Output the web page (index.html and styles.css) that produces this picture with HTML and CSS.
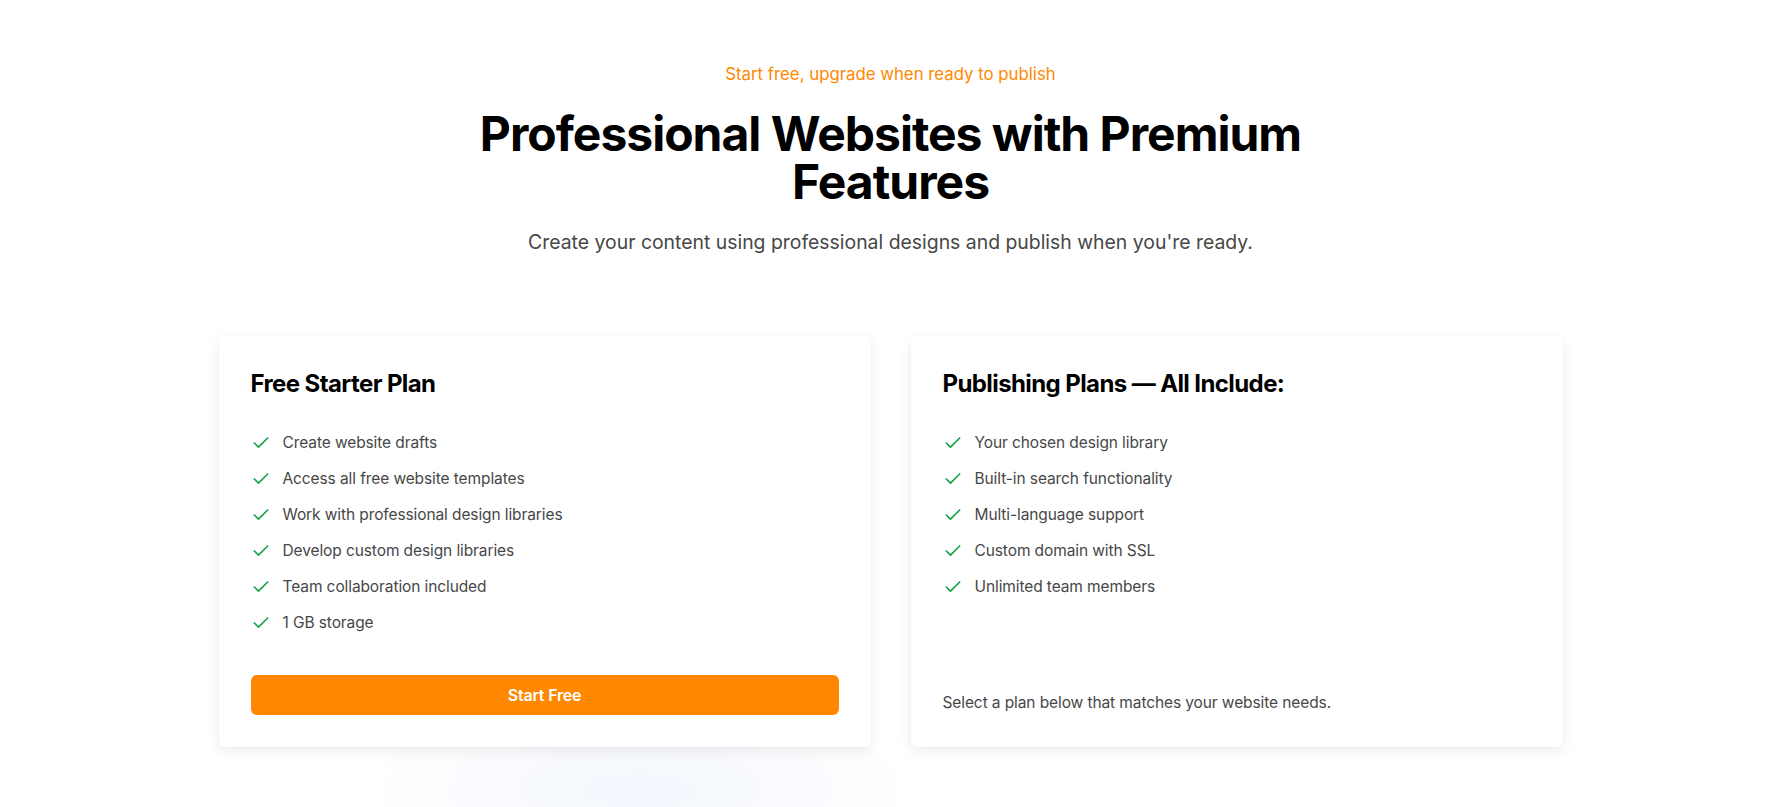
FILE: index.html
```html
<!DOCTYPE html>
<html lang="en">
<head>
<meta charset="utf-8">
<title>Pricing</title>
<link rel="stylesheet" href="styles.css">
</head>
<body>
<main class="page">
  <div class="glow"></div>
  <header class="hero">
    <p class="eyebrow">Start free, upgrade when ready to publish</p>
    <h1 class="title">Professional Websites with Premium<br>Features</h1>
    <p class="lead">Create your content using professional designs and publish when you're ready.</p>
  </header>
  <section class="cards">
    <article class="card">
      <h2 class="card-title">Free Starter Plan</h2>
      <ul class="features">
        <li><svg class="check" viewBox="0 0 24 24"><path d="M20 6 9 17l-5-5"/></svg>Create website drafts</li>
        <li><svg class="check" viewBox="0 0 24 24"><path d="M20 6 9 17l-5-5"/></svg>Access all free website templates</li>
        <li><svg class="check" viewBox="0 0 24 24"><path d="M20 6 9 17l-5-5"/></svg>Work with professional design libraries</li>
        <li><svg class="check" viewBox="0 0 24 24"><path d="M20 6 9 17l-5-5"/></svg>Develop custom design libraries</li>
        <li><svg class="check" viewBox="0 0 24 24"><path d="M20 6 9 17l-5-5"/></svg>Team collaboration included</li>
        <li><svg class="check" viewBox="0 0 24 24"><path d="M20 6 9 17l-5-5"/></svg>1 GB storage</li>
      </ul>
      <button class="btn">Start Free</button>
    </article>
    <article class="card">
      <h2 class="card-title">Publishing Plans — All Include:</h2>
      <ul class="features">
        <li><svg class="check" viewBox="0 0 24 24"><path d="M20 6 9 17l-5-5"/></svg>Your chosen design library</li>
        <li><svg class="check" viewBox="0 0 24 24"><path d="M20 6 9 17l-5-5"/></svg>Built-in search functionality</li>
        <li><svg class="check" viewBox="0 0 24 24"><path d="M20 6 9 17l-5-5"/></svg>Multi-language support</li>
        <li><svg class="check" viewBox="0 0 24 24"><path d="M20 6 9 17l-5-5"/></svg>Custom domain with SSL</li>
        <li><svg class="check" viewBox="0 0 24 24"><path d="M20 6 9 17l-5-5"/></svg>Unlimited team members</li>
      </ul>
      <p class="note">Select a plan below that matches your website needs.</p>
    </article>
  </section>
</main>
</body>
</html>
```

FILE: styles.css
```css
* { box-sizing: border-box; }
html, body { margin: 0; padding: 0; background: #ffffff; }
body {
  font-family: Inter, "Noto Sans", "Liberation Sans", sans-serif;
  color: #000;
}
.page {
  position: relative;
  padding-top: 62px;
  height: 807px;
  overflow: hidden;
}
.glow {
  position: absolute;
  left: 360px;
  top: 700px;
  width: 560px;
  height: 180px;
  border-radius: 50%;
  background: radial-gradient(ellipse at center, rgba(220, 230, 250, 0.35), rgba(255, 255, 255, 0) 70%);
  z-index: 0;
}
.hero {
  position: relative;
  z-index: 1;
  text-align: center;
}
.eyebrow {
  margin: 0;
  font-size: 16.8px;
  line-height: 24px;
  color: #ff8800;
}
.title {
  margin: 24px 0 0;
  font-size: 48px;
  line-height: 48px;
  font-weight: 700;
  letter-spacing: -1px;
}
.lead {
  margin: 22px 0 0;
  font-size: 19.4px;
  line-height: 28px;
  color: #474747;
}
.cards {
  position: relative;
  z-index: 1;
  width: 1344px;
  margin: 80px auto 0;
  display: grid;
  grid-template-columns: 1fr 1fr;
  gap: 40px;
}
.card {
  background: rgba(255, 255, 255, 0.97);
  border-radius: 6px;
  box-shadow: 0 4px 14px rgba(0, 0, 0, 0.08), 0 0 2px rgba(0, 0, 0, 0.03);
  padding: 32px;
  height: 411px;
  display: flex;
  flex-direction: column;
}
.card-title {
  margin: 0;
  font-size: 24px;
  line-height: 32px;
  font-weight: 700;
  letter-spacing: -0.6px;
}
.features {
  list-style: none;
  margin: 31px 0 0;
  padding: 0;
  display: flex;
  flex-direction: column;
  gap: 12px;
}
.features li {
  display: flex;
  align-items: center;
  gap: 12px;
  font-size: 15.5px;
  line-height: 24px;
  letter-spacing: -0.1px;
  color: #474747;
}
.check {
  width: 20px;
  height: 20px;
  flex: none;
  fill: none;
  stroke: #16a34a;
  stroke-width: 2;
  stroke-linecap: round;
  stroke-linejoin: round;
}
.btn {
  margin-top: auto;
  width: 100%;
  height: 40px;
  border: 0;
  border-radius: 6px;
  background: #ff8800;
  color: #fff;
  font-family: inherit;
  font-size: 16px;
  font-weight: 600;
  letter-spacing: -0.2px;
}
.note {
  margin: auto 0 0;
  font-size: 15.5px;
  line-height: 24px;
  letter-spacing: -0.1px;
  color: #474747;
}
```
